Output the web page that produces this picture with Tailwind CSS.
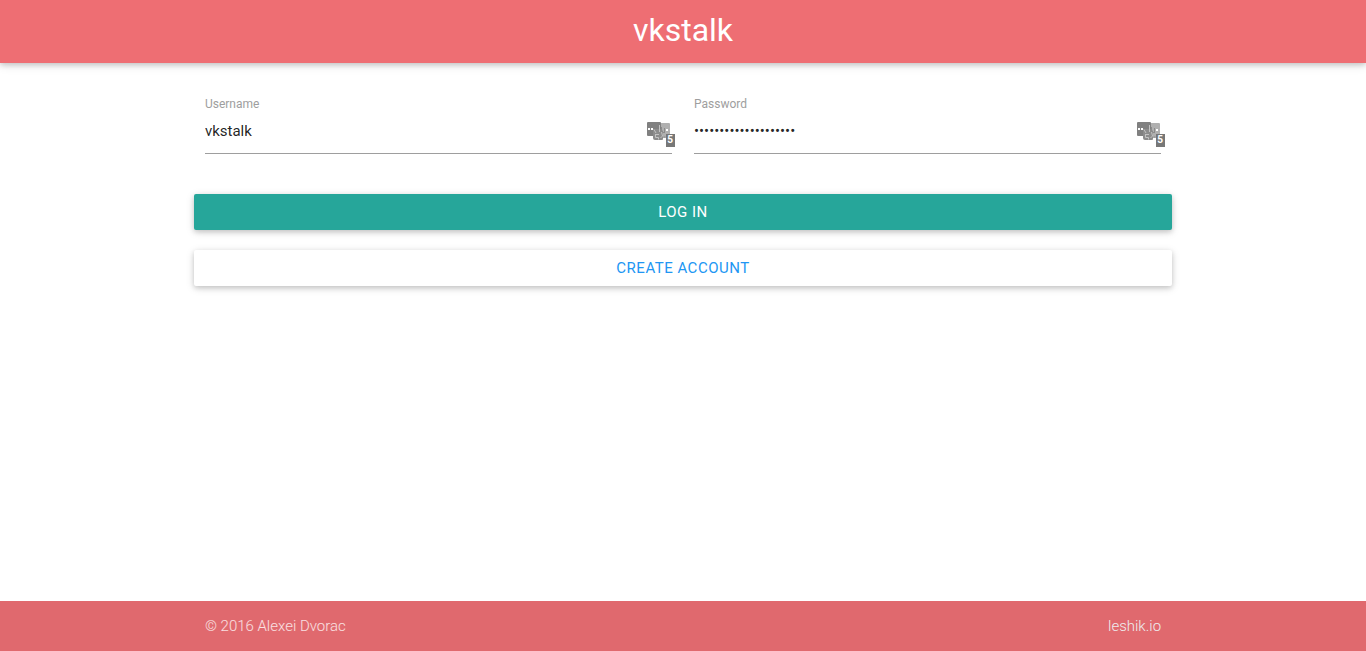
<!DOCTYPE html>
<html lang="en">
<head>
<meta charset="utf-8">
<meta name="viewport" content="width=device-width, initial-scale=1">
<title>vkstalk</title>
<script src="https://cdn.jsdelivr.net/npm/@tailwindcss/browser@4"></script>
</head>
<body class="flex min-h-screen flex-col bg-white font-[Roboto,sans-serif] text-[15px] text-black/87">
<svg class="hidden" aria-hidden="true">
  <symbol id="fill-icon" viewBox="0 0 29 26">
    <path fill="#b0b0b0" d="M14 2h9a1 1 0 0 1 1 1v14h-10z"/>
    <path fill="#808080" d="M2 1h12a1 1 0 0 1 1 1v12a1 1 0 0 1-1 1H2a1 1 0 0 1-1-1V2a1 1 0 0 1 1-1z"/>
    <path fill="#8c8c8c" d="M7 8h8l2 2v8a1 1 0 0 1-1 1H9a2 2 0 0 1-2-2z"/>
    <path fill="none" stroke="#c2c2c2" d="M8 8.500l2 3.500M13.500 4v7M9 13.500h4M9.500 14v2.500h3v2M15.500 11l1 4-2 2"/>
    <path fill="none" stroke="#8a8a8a" d="M15.500 6v5M17 11.500h2M18.500 7v4M17.500 16h2"/>
    <path fill="#fff" d="M2 7h2v2H2zM5 7h2v2H5zM20 8h2v2h-2z"/>
    <path fill="#777" d="M20 13h9v13h-9z"/>
  </symbol>
</svg>
<header class="z-10 bg-[#ee6e73] pb-0.5 text-center text-white shadow-[0_2px_5px_rgb(0_0_0/0.16),0_2px_10px_rgb(0_0_0/0.12)]">
  <h1 class="text-[32px] leading-[61px]"><a href="#">vkstalk</a></h1>
</header>
<main class="mx-auto w-[70%] flex-1 pt-[33px]">
  <form>
    <div class="grid grid-cols-2 gap-[22px]">
      <div class="relative">
        <label for="username" class="block text-xs leading-4 text-[#9e9e9e]">Username</label>
        <input id="username" type="text" value="vkstalk" autocomplete="off" class="block h-[42px] w-full border-b border-[#9e9e9e] pb-1 outline-none">
        <button type="button" aria-label="Fill username" class="absolute top-[25px] -right-[3px] h-[26px] w-[29px]">
          <svg class="size-full"><use href="#fill-icon"/></svg>
          <span class="absolute right-[2px] bottom-[1px] text-[10px] leading-3 font-bold text-white">5</span>
        </button>
      </div>
      <div class="relative">
        <label for="password" class="block text-xs leading-4 text-[#9e9e9e]">Password</label>
        <input id="password" type="password" value="abcdefghijklmnopqrst" autocomplete="off" class="block h-[42px] w-full border-b border-[#9e9e9e] pb-1 outline-none">
        <button type="button" aria-label="Fill password" class="absolute top-[25px] -right-1 h-[26px] w-[29px]">
          <svg class="size-full"><use href="#fill-icon"/></svg>
          <span class="absolute right-[2px] bottom-[1px] text-[10px] leading-3 font-bold text-white">5</span>
        </button>
      </div>
    </div>
    <div class="-mx-[11px] mt-10 flex flex-col gap-5">
      <button type="submit" class="h-9 rounded-xs bg-[#26a69a] tracking-[0.5px] text-white uppercase shadow-[0_2px_5px_rgb(0_0_0/0.16),0_2px_10px_rgb(0_0_0/0.12)]">Log in</button>
      <button type="button" class="h-9 rounded-xs bg-white tracking-[0.5px] text-[#2196f3] uppercase shadow-[0_2px_5px_rgb(0_0_0/0.16),0_2px_10px_rgb(0_0_0/0.12)]">Create account</button>
    </div>
  </form>
</main>
<footer class="bg-[#e0696e] font-light">
  <div class="mx-auto flex w-[70%] justify-between leading-[50px]">
    <span class="text-white/80">© 2016 Alexei Dvorac</span>
    <a href="#" class="text-[#eeeeee]">leshik.io</a>
  </div>
</footer>
</body>
</html>
